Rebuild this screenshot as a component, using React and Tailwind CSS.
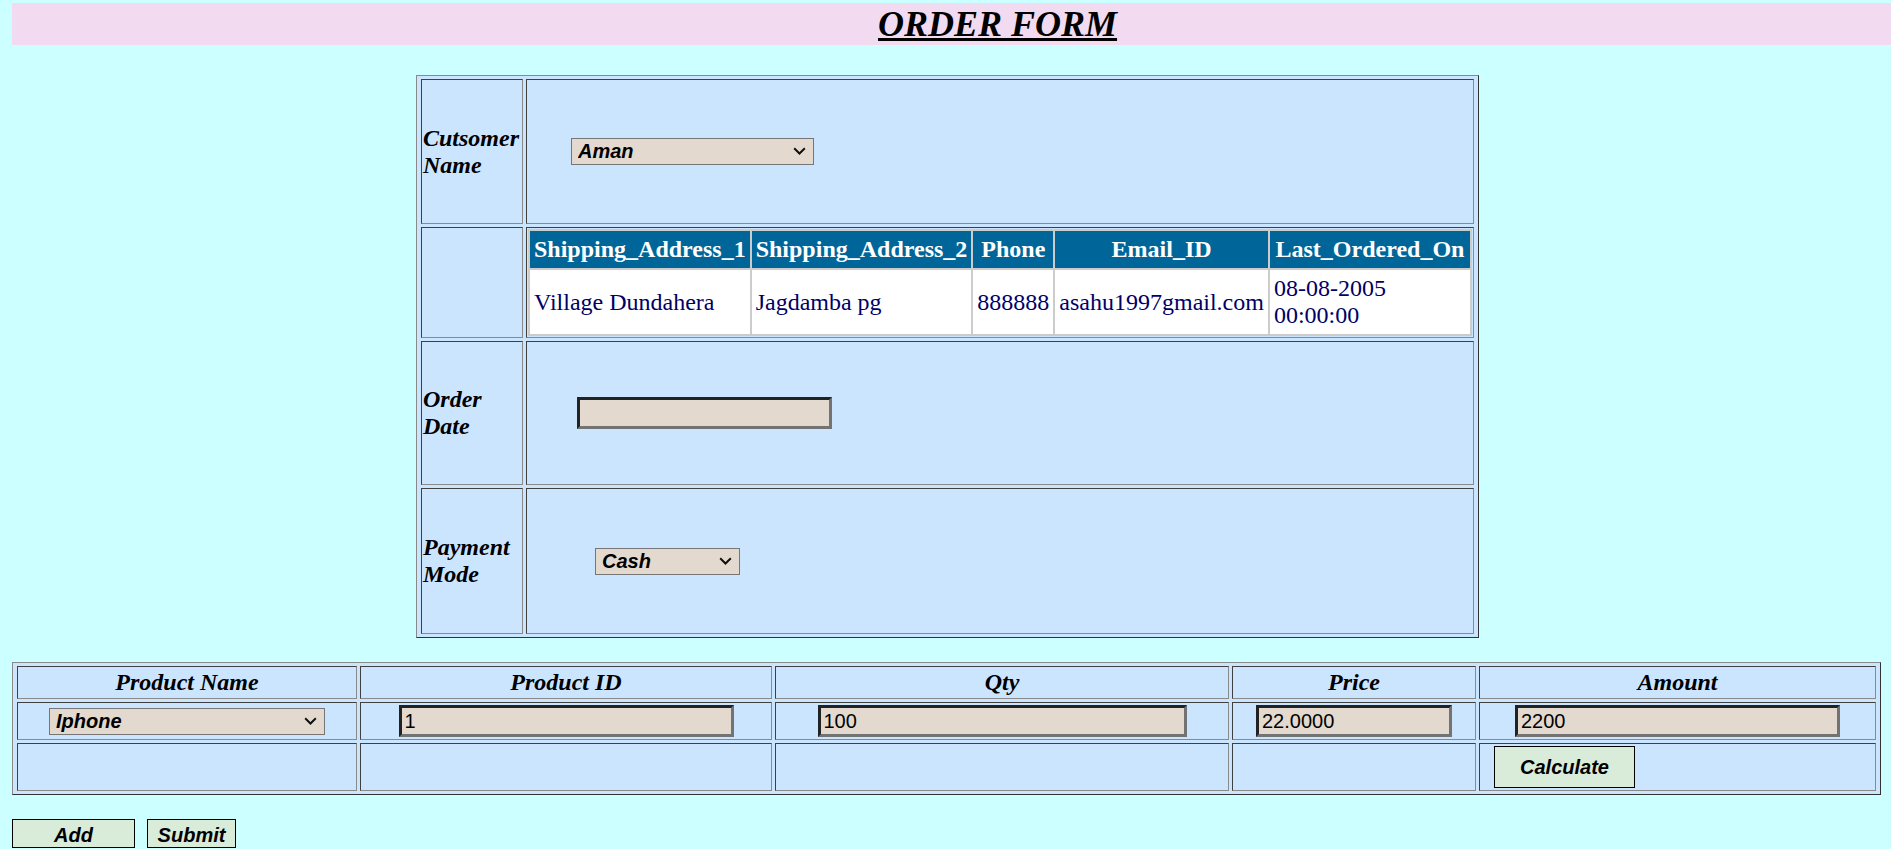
const cell = "border border-t-[#404040] border-l-[#404040] border-r-[#8a8a8a] border-b-[#8a8a8a] p-[1px] align-middle"
const label = "text-[24px] leading-[27px] font-bold italic text-black"
const inputCls = "h-[32px] bg-[#e3d9cf] border-[3px] border-t-[#222] border-l-[#222] border-r-[#737373] border-b-[#737373] px-[3px] font-['Liberation_Sans',Arial,sans-serif] text-[20px] text-black align-middle outline-none"
const btnCls = "h-[29px] bg-[#d9ebd9] border border-black font-['Liberation_Sans',Arial,sans-serif] text-[20px] font-bold italic text-black"

function FakeSelect({ value, className }) {
  return (
    <div className={`relative inline-block align-middle ${className}`}>
      <select
        defaultValue={value}
        className="appearance-none w-full h-full bg-[#e3d9cf] border border-[#767676] pl-[6px] font-['Liberation_Sans',Arial,sans-serif] text-[20px] leading-[23px] font-bold italic text-black outline-none"
      >
        <option>{value}</option>
      </select>
      <svg className="pointer-events-none absolute right-[8px] top-[9px]" width="13" height="8" viewBox="0 0 13 8">
        <path d="M1.2 1.2l5.3 5.3 5.3-5.3" fill="none" stroke="#111" strokeWidth="2" />
      </svg>
    </div>
  )
}

const customer = {
  a1: 'Village Dundahera',
  a2: 'Jagdamba pg',
  phone: '888888',
  email: 'asahu1997gmail.com',
  last: '08-08-2005 00:00:00',
}

export default function App() {
  const gh = "bg-[#006699] text-white font-bold text-[24px] leading-[27px] text-center px-[4px] py-[5px] border-2 border-[#cccccc] whitespace-nowrap"
  const gd = "bg-white text-[#000066] text-[24px] leading-[27px] text-left px-[4px] py-[5px] border-2 border-[#cccccc] align-middle"
  const ph = `${cell} text-[24px] leading-[27px] font-bold italic text-center`

  return (
    <div className="min-h-screen bg-[#ccffff] pt-[3px] pl-[12px] font-['Liberation_Serif','Times_New_Roman',serif] text-black">
      <div className="h-[42px] bg-[#f2dbf1] pl-[866px]">
        <h2 className="text-[36px] leading-[42px] font-bold italic underline">ORDER FORM</h2>
      </div>

      <table className="mt-[30px] ml-[404px] w-[1063px] bg-[#cce5ff] border border-t-[#8a8a8a] border-l-[#8a8a8a] border-r-[#333] border-b-[#333] border-separate border-spacing-[3px] px-[1px]">
        <tbody>
          <tr>
            <td className={`${cell} w-[102px] h-[145px]`}>
              <div className={label}>Cutsomer Name</div>
            </td>
            <td className={`${cell} pl-[44px]`}>
              <FakeSelect value="Aman" className="w-[243px] h-[27px]" />
            </td>
          </tr>
          <tr>
            <td className={`${cell} h-[111px]`}></td>
            <td className={cell}>
              <table className="w-full border-collapse border-2 border-[#cccccc] bg-white">
                <thead>
                  <tr>
                    <th className={gh}>Shipping_Address_1</th>
                    <th className={gh}>Shipping_Address_2</th>
                    <th className={gh}>Phone</th>
                    <th className={gh}>Email_ID</th>
                    <th className={gh}>Last_Ordered_On</th>
                  </tr>
                </thead>
                <tbody>
                  <tr>
                    <td className={gd}>{customer.a1}</td>
                    <td className={gd}>{customer.a2}</td>
                    <td className={gd}>{customer.phone}</td>
                    <td className={gd}>{customer.email}</td>
                    <td className={gd}>{customer.last}</td>
                  </tr>
                </tbody>
              </table>
            </td>
          </tr>
          <tr>
            <td className={`${cell} h-[144px]`}>
              <div className={label}>Order Date</div>
            </td>
            <td className={`${cell} pl-[50px]`}>
              <input readOnly defaultValue="" className={`${inputCls} w-[255px]`} />
            </td>
          </tr>
          <tr>
            <td className={`${cell} h-[146px]`}>
              <div className={label}>Payment Mode</div>
            </td>
            <td className={`${cell} pl-[68px]`}>
              <FakeSelect value="Cash" className="w-[145px] h-[27px]" />
            </td>
          </tr>
        </tbody>
      </table>

      <table className="mt-[24px] w-[1869px] table-fixed bg-[#cce5ff] border border-t-[#8a8a8a] border-l-[#8a8a8a] border-r-[#333] border-b-[#333] border-separate border-spacing-[3px] px-[1px]">
        <thead>
          <tr>
            <th className={`${ph} w-[340px] h-[33px]`}>Product Name</th>
            <th className={`${ph} w-[412px]`}>Product ID</th>
            <th className={`${ph} w-[454px]`}>Qty</th>
            <th className={`${ph} w-[244px]`}>Price</th>
            <th className={`${ph} w-[397px]`}>Amount</th>
          </tr>
        </thead>
        <tbody>
          <tr>
            <td className={`${cell} h-[38px] text-center`}>
              <FakeSelect value="Iphone" className="w-[276px] h-[27px] text-left" />
            </td>
            <td className={`${cell} text-center`}>
              <input readOnly defaultValue="1" className={`${inputCls} w-[335px]`} />
            </td>
            <td className={`${cell} text-center`}>
              <input readOnly defaultValue="100" className={`${inputCls} w-[369px]`} />
            </td>
            <td className={`${cell} text-center`}>
              <input readOnly defaultValue="22.0000" className={`${inputCls} w-[196px]`} />
            </td>
            <td className={`${cell} text-center`}>
              <input readOnly defaultValue="2200" className={`${inputCls} w-[325px]`} />
            </td>
          </tr>
          <tr>
            <td className={`${cell} h-[48px]`}></td>
            <td className={cell}></td>
            <td className={cell}></td>
            <td className={cell}></td>
            <td className={`${cell} pl-[14px]`}>
              <button type="button" className={`${btnCls} w-[141px] h-[42px]`}>Calculate</button>
            </td>
          </tr>
        </tbody>
      </table>

      <div className="mt-[24px] flex gap-[12px]">
        <button type="button" className={`${btnCls} w-[123px]`}>Add</button>
        <button type="button" className={`${btnCls} w-[89px]`}>Submit</button>
      </div>
    </div>
  )
}
